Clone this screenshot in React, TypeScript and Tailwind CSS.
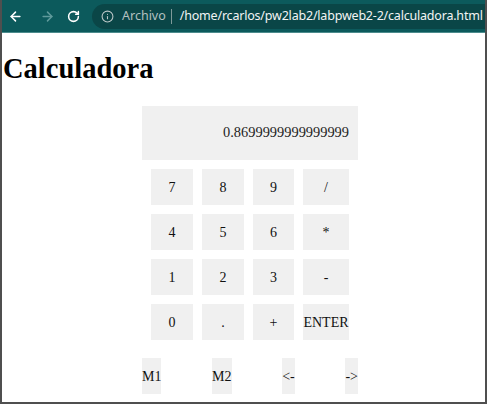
import React, { useState } from "react";
import { ArrowLeft, ArrowRight, RotateCw, Info } from "lucide-react";

const keys: string[][] = [
    ["7", "8", "9", "/"],
    ["4", "5", "6", "*"],
    ["1", "2", "3", "-"],
    ["0", ".", "+", "ENTER"],
];

const extras = ["M1", "M2", "<-", "->"];

const TopBar: React.FC = () => {
    return (
        <div className="flex flex-col">
            <div className="h-[32px] bg-[#0c5a5c] flex items-center">
                <ArrowLeft className="ml-[6px] text-white" size={15} strokeWidth={2.4} />
                <ArrowRight className="ml-[17px] text-[#5f9a9b]" size={15} strokeWidth={2.4} />
                <RotateCw className="ml-[12px] text-white" size={13} strokeWidth={2.8} />
                <div className="ml-[12px] flex-1 h-[25px] rounded-l-full bg-[#0a4647] flex items-center pl-[9px] font-['Noto_Sans',sans-serif] text-[12.5px] whitespace-nowrap overflow-hidden">
                    <Info className="text-[#b9c6c6]" size={13} strokeWidth={2} />
                    <span className="ml-[8px] text-[#b3c0c0]">Archivo</span>
                    <span className="ml-[5px] w-px h-[15px] bg-[#7f9a9a]" />
                    <span className="ml-[8px] text-[#f2f4f4] tracking-[-0.2px]">
                        /home/rcarlos/pw2lab2/labpweb2-2/calculadora.html
                    </span>
                </div>
            </div>
            <div className="h-[1px] bg-[#4c8c8d]" />
        </div>
    );
};

const App: React.FC = () => {
    const [display] = useState("0.8699999999999999");

    return (
        <div className="w-[487px] h-[404px] bg-white border-x-2 border-b-2 border-[#4f4f4f] overflow-hidden font-['Liberation_Serif',serif]">
            <TopBar />
            <h1 className="mt-[20px] ml-[1px] text-[28.5px] font-bold leading-[32px] text-black">
                Calculadora
            </h1>
            <div className="ml-[140px] mt-[21px] w-[216px] flex flex-col">
                <div className="h-[54px] bg-[#f0f0f0] flex items-center justify-end pr-[9px] text-[14.4px] text-[#222]">
                    {display}
                </div>
                <div className="mt-[9px] px-[9px] grid grid-cols-[42px_42px_41px_46px] gap-x-[9px] gap-y-[9px]">
                    {keys.flat().map((k) => (
                        <button
                            key={k}
                            className="h-[36px] bg-[#f0f0f0] text-[14px] text-[#111] flex items-center justify-center whitespace-nowrap"
                        >
                            {k}
                        </button>
                    ))}
                </div>
                <div className="mt-[18px] flex justify-between">
                    {extras.map((e) => (
                        <button
                            key={e}
                            className="h-[36px] px-0 bg-[#f0f0f0] text-[14px] text-[#111]"
                        >
                            {e}
                        </button>
                    ))}
                </div>
            </div>
        </div>
    );
};

export default App;
